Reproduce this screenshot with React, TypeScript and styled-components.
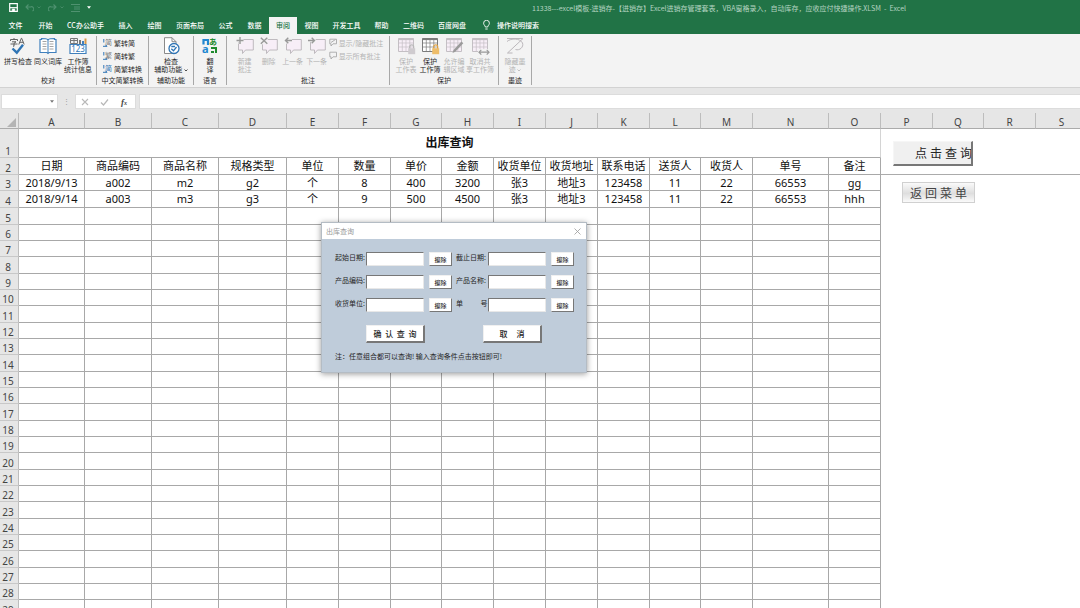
import React from "react";
import styled, { createGlobalStyle, css } from "styled-components";

const sans = `"Noto Sans", "Noto Sans CJK SC", sans-serif`;
const cjk = `"Noto Sans CJK SC", "Noto Sans", sans-serif`;

const Global = createGlobalStyle`
  * { box-sizing: border-box; }
  body { margin: 0; background: #fff; font: 7px/8px ${cjk}; color: #262626; overflow: hidden; }
  button, input { font: inherit; color: inherit; margin: 0; padding: 0; border: 0; border-radius: 0; background: none; }
`;

const Window = styled.div`
  display: flex;
  flex-direction: column;
  height: 100vh;
  overflow: hidden;
`;

/* ---------- title bar and tabs ---------- */

const TitleBar = styled.header`
  display: flex;
  align-items: center;
  flex: none;
  height: 17px;
  padding: 0 0 2px 9px;
  background: #217346;
  color: #b5d3c1;
`;

const QuickTools = styled.div`
  display: flex;
  align-items: center;
  gap: 7px;
  width: 523px;
`;

const QuickButton = styled.button<{ $dim?: boolean }>`
  display: flex;
  align-items: center;
  gap: 3px;
  color: ${(p) => (p.$dim ? "#4f9270" : "#fff")};
`;

const TitleText = styled.h1`
  margin: 0;
  font: 400 7px/10px ${cjk};
  white-space: nowrap;
`;

const TabBar = styled.nav`
  display: flex;
  flex: none;
  height: 17px;
  background: #217346;
`;

const Tab = styled.button<{ $w: number; $active?: boolean }>`
  width: ${(p) => p.$w}px;
  && { padding-bottom: 2px; }
  color: ${(p) => (p.$active ? "#217346" : "#fff")};
  background: ${(p) => (p.$active ? "#f3f3f3" : "transparent")};
  font-weight: 500;
  white-space: nowrap;
`;

const Tell = styled.button`
  display: flex;
  align-items: center;
  gap: 7px;
  && { padding-bottom: 2px; margin-left: 10px; }
  color: #fff;
  font-weight: 500;
`;

/* ---------- ribbon ---------- */

const Ribbon = styled.div`
  display: flex;
  flex: none;
  height: 54px;
  padding: 2px 0;
  background: #f3f3f3;
  border-bottom: 1px solid #d2d2d2;
`;

const Group = styled.section<{ $w: number }>`
  display: flex;
  flex-direction: column;
  width: ${(p) => p.$w}px;
  border-right: 1px solid #a8a8a8;
`;

const GroupBody = styled.div`
  display: flex;
  justify-content: center;
  flex: 1;
`;

const GroupName = styled.div`
  height: 9px;
  text-align: center;
  white-space: nowrap;
`;

const Big = styled.button<{ $w: number; $off?: boolean }>`
  display: flex;
  flex-direction: column;
  align-items: center;
  width: ${(p) => p.$w}px;
  padding-top: 1px;
  white-space: nowrap;
  color: ${(p) => (p.$off ? "#b4b4b4" : "#262626")};
  svg { flex: none; margin-bottom: 2px; }
  span svg { margin-bottom: 0; }
`;

const SmallList = styled.div`
  display: flex;
  flex-direction: column;
`;

const Small = styled.button<{ $off?: boolean }>`
  display: flex;
  align-items: center;
  gap: 2px;
  height: 13px;
  white-space: nowrap;
  color: ${(p) => (p.$off ? "#b4b4b4" : "#262626")};
`;

/* ---------- formula bar ---------- */

const FormulaBar = styled.div`
  display: flex;
  flex: none;
  height: 25px;
  padding: 6px 0 4px 1px;
  background: #e6e6e6;
`;

const NameBox = styled.div`
  display: flex;
  align-items: center;
  width: 57px;
  padding-right: 3px;
  background: #fff;
  border: 1px solid #dcdcdc;
  input { flex: 1; min-width: 0; outline: 0; }
`;

const Grip = styled.span`
  width: 17px;
  line-height: 15px;
  text-align: center;
  color: #999;
`;

const FormulaTools = styled.div`
  display: flex;
  align-items: center;
  justify-content: space-around;
  width: 61px;
  margin-right: 3px;
  background: #fff;
  border: 1px solid #dcdcdc;
`;

const FormulaInput = styled.input`
  flex: 1;
  min-width: 0;
  && { background: #fff; border: 1px solid #dcdcdc; border-right: 0; }
`;

/* ---------- sheet ---------- */

const Sheet = styled.main`
  position: relative;
  flex: 1;
  min-height: 0;
  overflow: hidden;
`;

const Grid = styled.table`
  table-layout: fixed;
  width: 1088px;
  border-collapse: separate;
  border-spacing: 0;
  font: 11px/14px ${sans};
  color: #111;
`;

const headCell = css`
  padding: 0;
  background: #e6e6e6;
  font: 400 10px/12px ${sans};
  color: #444;
`;

const ColHead = styled.th`
  ${headCell}
  height: 15px;
  padding-top: 3px;
  border-right: 1px solid #bdbdbd;
  border-bottom: 1px solid #ababab;
`;

const Corner = styled(ColHead)`
  padding: 0 2px 1px 0;
  text-align: right;
  vertical-align: bottom;
  svg { display: block; margin-left: auto; }
`;

const Row = styled.tr<{ $h: number }>`
  height: ${(p) => p.$h}px;
`;

const RowHead = styled.th`
  ${headCell}
  padding-right: 2px;
  vertical-align: bottom;
  border-right: 1px solid #bdbdbd;
  border-bottom: 1px solid #c8c8c8;
`;

const Cell = styled.td`
  padding: 0;
  text-align: center;
  white-space: nowrap;
  border-right: 1px solid #a8a8a8;
  border-bottom: 1px solid #a8a8a8;
`;

const TitleCell = styled(Cell)`
  padding-bottom: 2px;
  font: 700 12px/16px ${cjk};
  border-right-color: #d4d4d4;
`;

const Blank = styled.td<{ $line?: boolean }>`
  padding: 0;
  border-bottom: ${(p) => (p.$line ? "1px solid #ababab" : "0")};
`;

const QueryButton = styled.button`
  position: absolute;
  left: 893px;
  top: 28px;
  width: 80px;
  height: 25px;
  overflow: hidden;
  && {
    padding-left: 21px;
    background: #f0f0f0;
    border: 1px solid #f6f6f6;
    border-right: 2px solid #777;
    border-bottom: 2px solid #777;
    font: 12px/16px ${cjk};
    letter-spacing: 3px;
    text-align: left;
    white-space: nowrap;
  }
`;

const BackButton = styled.button`
  position: absolute;
  left: 902px;
  top: 69px;
  width: 73px;
  height: 21px;
  && {
    padding-left: 3px;
    background: linear-gradient(#fafafa, #dedede 55%, #fafafa);
    border: 1px solid #d0d0d0;
    color: #444;
    font: 12px/16px ${cjk};
    letter-spacing: 3px;
    white-space: nowrap;
  }
`;

/* ---------- query dialog ---------- */

const Dialog = styled.section`
  position: absolute;
  left: 321px;
  top: 109px;
  width: 266px;
  background: #bfccda;
  border: 1px solid #b4bcc4;
  box-shadow: 0 1px 6px rgba(0, 0, 0, 0.4);
`;

const DialogTitle = styled.header`
  display: flex;
  align-items: center;
  justify-content: space-between;
  height: 16px;
  padding: 0 5px 0 4px;
  background: #fff;
  color: #999;
  button { display: flex; }
`;

const Form = styled.form`
  padding: 13px 8px 11px 13px;
`;

const Fields = styled.div`
  display: grid;
  grid-template-columns: 31px 58px 32px 32px 58px 32px;
  row-gap: 9px;
`;

const Label = styled.label`
  height: 14px;
  line-height: 10px;
  white-space: pre;
`;

const Field = styled.input`
  height: 14px;
  min-width: 0;
  && {
    background: #fff;
    border: 1px solid #e8e8e8;
    border-top-color: #777;
    border-left-color: #777;
  }
`;

const raised = css`
  background: #fff;
  border: 1px solid #f0f0f0;
  border-right-color: #777;
  border-bottom-color: #777;
`;

const Clear = styled.button`
  height: 14px;
  && {
    ${raised}
    margin: 0 4px 0 5px;
    padding-top: 2px;
    font: 500 6px/8px ${cjk};
  }
`;

const Actions = styled.div`
  display: flex;
  gap: 58px;
  margin: 13px 0 8px 31px;
`;

const Action = styled.button`
  width: 59px;
  height: 18px;
  && {
    ${raised}
    border-width: 1px 2px 2px 1px;
    font: 500 8px/10px ${cjk};
    white-space: pre;
  }
`;

const Note = styled.p`
  margin: 0;
  line-height: 10px;
`;

/* ---------- icons ---------- */

const Caret = ({ c = "currentColor" }: { c?: string }) => (
  <svg width="4" height="3" viewBox="0 0 5 3"><path d="M0 0h5L2.500 3z" fill={c} /></svg>
);

const Chevron = () => (
  <svg width="4" height="3" viewBox="0 0 4 3"><path d="M.5.5 2 2 3.500.5" fill="none" stroke="currentColor" strokeWidth=".8" /></svg>
);

const SaveIcon = () => (
  <svg width="9" height="9" viewBox="0 0 9 9" fill="none" stroke="#fff">
    <path d="M.7.7h7.600v7.600H.7z" strokeWidth="1.200" />
    <path d="M1 4.700h7" strokeWidth="1.200" /><path d="M3.200 6v2.500h2.600V6z" fill="#fff" strokeWidth=".6" />
  </svg>
);

const UndoIcon = ({ flip }: { flip?: boolean }) => (
  <svg width="9" height="8" viewBox="0 0 9 8" fill="none" stroke="currentColor" strokeWidth="1.100">
    <path d={flip ? "M5.500.5 8 3 5.500 5.500M8 3H3.500a2 2 0 0 0-2 4" : "M3.500.5 1 3l2.500 2.500M1 3h4.500a2 2 0 0 1 2 4"} />
  </svg>
);

const ListIcon = () => (
  <svg width="9" height="8" viewBox="0 0 9 8" fill="none" stroke="currentColor"><path d="M0 .5h9M3 3h6M3 5h6M0 7.500h9" /></svg>
);

const BulbIcon = () => (
  <svg width="7" height="10" viewBox="0 0 7 10" fill="none" stroke="#fff" strokeWidth=".9">
    <path d="M2.300 7C2.300 5.500.6 5 .6 3.200a2.900 2.900 0 0 1 5.800 0C6.400 5 4.700 5.500 4.700 7zM2.300 9h2.400" />
  </svg>
);

const SpellIcon = () => (
  <svg width="18" height="18" viewBox="0 0 18 18" fill="none">
    <path d="M5 1v1.300M1.500 4V2.500h7V4M3 4.800h4L5 6.300v3L4 9M1.500 7h7" stroke="#555" strokeWidth=".9" />
    <path d="m9.800 7.500 2.500-6.200h.4l2.500 6.200M10.700 5.300h3.600" stroke="#555" strokeWidth=".9" />
    <path d="m3.500 11.500 4.300 4.200 6.200-8" stroke="#2f75b5" strokeWidth="2.400" />
  </svg>
);

const BookIcon = () => (
  <svg width="18" height="18" viewBox="0 0 18 18" fill="none">
    <path d="M1 2.500h1.500V1.500c2.500 0 5 0 6.500 1.200C10.500 1.500 13 1.500 15.500 1.500v1H17v13h-7l-1 1-1-1H1z" fill="#fff" stroke="#4080bd" strokeWidth="1.200" />
    <path d="M9 3v13" stroke="#4080bd" />
    <path d="M3.500 4.500h4M3.500 7h4M3.500 9.500h4M3.500 12h4M10.500 4.500h4M10.500 7h4M10.500 9.500h4M10.500 12h4" stroke="#8d8d8d" strokeWidth=".8" />
  </svg>
);

const StatsIcon = () => (
  <svg width="18" height="18" viewBox="0 0 18 18" fill="none">
    <path d="M1.500 1.500h7v5h-7zM1.500 3.500h7M5 1.500v5" stroke="#777" />
    <path d="M11 7V3" stroke="#777" strokeWidth="2" /><path d="M14 7V4" stroke="#4080bd" strokeWidth="2" /><path d="M16.500 7V1.500" stroke="#d89a4a" strokeWidth="2" />
    <path d="M1 7.500h16v9H1z" fill="#fff" stroke="#4080bd" strokeWidth="1.200" />
    <text x="9" y="15" textAnchor="middle" fontSize="8" fontFamily="Noto Sans" fill="#2f75b5">123</text>
  </svg>
);

const ConvertIcon = ({ glyph, both }: { glyph: string; both?: boolean }) => (
  <svg width="9" height="9" viewBox="0 0 9 9">
    <text x="2" y="7" fontSize="7" fontFamily="Noto Sans CJK SC" fill={both ? "#2f75b5" : "#777"}>{glyph}</text>
    <path d="M.8 1v3.500M0 8.300h4M2.500 6.800 4 8.300" stroke="#2f75b5" fill="none" />
  </svg>
);

const CheckAccessIcon = () => (
  <svg width="18" height="18" viewBox="0 0 18 18" fill="none">
    <path d="M2.500.7h7.500l4 4v11.800H2.500z" fill="#fff" stroke="#8a8a8a" /><path d="M10 .7v4h4" stroke="#8a8a8a" />
    <circle cx="12" cy="11.500" r="5" fill="#fff" stroke="#2f75b5" strokeWidth="1.300" />
    <path d="M9.300 11.800 11.500 13.800l3-3.800M9.300 9.500H13" stroke="#2f75b5" strokeWidth="1.300" />
  </svg>
);

const TranslateIcon = () => (
  <svg width="18" height="18" viewBox="0 0 18 18" fill="none">
    <path d="M2.500 2v5.500M2.500 3H7v5" stroke="#2186d0" strokeWidth="2.200" />
    <text x="8" y="8" fontSize="8" fontWeight="700" fontFamily="Noto Sans CJK JP" fill="#1e8a2e">あ</text>
    <text x="1" y="16" fontSize="11" fontWeight="700" fontFamily="Noto Sans" fill="#2186d0">a</text>
    <path d="M10 11h5v5M10 15h3" stroke="#1e8a2e" strokeWidth="2" />
  </svg>
);

const marks = {
  add: "M4 0v7M.5 3.500h7",
  del: "M.8.8l6.500 6M7.300.8.8 6.800",
  prev: "M8 3.500H1.500M4.300.8 1.500 3.500l2.800 2.700",
  next: "M0 3.500h6.500M3.700.8 6.500 3.500 3.700 6.200",
};

const CommentIcon = ({ mark }: { mark: keyof typeof marks }) => (
  <svg width="18" height="18" viewBox="0 0 18 18" fill="none">
    <path d="M2.500 2.500h14.800v10.500H9.500l-3 3.500V13h-4z" fill="#f7eef7" stroke="#b9b4b9" strokeWidth=".9" />
    <path d={marks[mark]} stroke="#f3f3f3" strokeWidth="3" />
    <path d={marks[mark]} stroke="#999" strokeWidth="1.400" />
  </svg>
);

const NoteIcon = ({ slash }: { slash?: boolean }) => (
  <svg width="8" height="9" viewBox="0 0 8 9" fill="none" stroke="#a8a8a8" strokeWidth=".9">
    <path d="M.8 1.200h6.700v4.600H4L2 8V5.800H.8z" />{slash && <path d="m2 4.500 4.500-3" />}
  </svg>
);

const SheetIcon = ({ kind }: { kind: "sheet" | "book" | "edit" | "share" }) => {
  const on = kind === "book";
  const ink = on ? "#7b7b7b" : "#c4bfc4";
  return (
    <svg width="19" height="18" viewBox="0 0 19 18" fill="none">
      <path d="M1.500 1.500h15v13h-15z" fill={on ? "#fff" : "#f7eef7"} stroke={ink} />
      <path d="M1.500 2.300h15" stroke={ink} strokeWidth="1.600" />
      <path d="M1.500 6h15M1.500 10h15M5.300 2v12.500M9 2v12.500M12.800 2v12.500" stroke={ink} strokeWidth=".7" />
      {(kind === "sheet" || on) && (
        <>
          <path d="M12.700 11.500V9.800a2 2 0 0 1 4 0v1.700" stroke={on ? "#dfa243" : "#b8b8b8"} strokeWidth="1.200" />
          <path d="M11.200 11.200h7v6h-7z" fill={on ? "#eebd6a" : "#cfcbcf"} />
        </>
      )}
      {kind === "edit" && <path d="m7.500 16 1-3 8-8.500 1.800 1.800-8 8.500z" fill="#9a9a9a" />}
      {kind === "share" && (
        <>
          <path d="M7 12h12v6H7z" fill="#f3f3f3" />
          <path d="M8 15.200h10M10.300 12.800 8 15.200l2.300 2.400M15.700 12.800l2.300 2.400-2.300 2.400" stroke="#999" strokeWidth="1.200" />
        </>
      )}
    </svg>
  );
};

const InkIcon = () => (
  <svg width="19" height="18" viewBox="0 0 19 18" fill="none" stroke="#b4b0b4" strokeWidth=".9">
    <path d="M1 1.500h15.500M1 4.500C5 1 14 1 16.500 6c1.500 4-3 8-7 6.500M1.500 16 17 1.500M1.500 16h5" />
  </svg>
);

/* ---------- data ---------- */

const tabs: [string, number][] = [
  ["开始", 29], ["CC办公助手", 51], ["插入", 29], ["绘图", 29], ["页面布局", 42], ["公式", 29], ["数据", 29],
  ["审阅", 28], ["视图", 29], ["开发工具", 41], ["帮助", 29], ["二维码", 35], ["百度网盘", 42],
];

const columns: [string, number][] = [
  ["A", 66], ["B", 67], ["C", 67], ["D", 68], ["E", 52], ["F", 52], ["G", 51], ["H", 52], ["I", 52], ["J", 52],
  ["K", 52], ["L", 51], ["M", 52], ["N", 76], ["O", 52], ["P", 52], ["Q", 51], ["R", 52], ["S", 52],
];

const records: string[][] = [
  ["日期", "商品编码", "商品名称", "规格类型", "单位", "数量", "单价", "金额", "收货单位", "收货地址", "联系电话", "送货人", "收货人", "单号", "备注"],
  ["2018/9/13", "a002", "m2", "g2", "个", "8", "400", "3200", "张3", "地址3", "123458", "11", "22", "66553", "gg"],
  ["2018/9/14", "a003", "m3", "g3", "个", "9", "500", "4500", "张3", "地址3", "123458", "11", "22", "66553", "hhh"],
];

const rowNumbers = Array.from({ length: 28 }, (_, i) => i + 2);
const rowHeight = (n: number) => (n === 4 || n % 3 === 2 ? 17 : 16);

const fields: [string, string][] = [
  ["start", "起始日期:"], ["end", "截止日期:"], ["code", "产品编码:"],
  ["name", "产品名称:"], ["unit", "收货单位:"], ["order", "单\u3000\u3000\u2002号"],
];

export default function App() {
  return (
    <Window>
      <Global />
      <TitleBar>
        <QuickTools>
          <QuickButton aria-label="保存"><SaveIcon /></QuickButton>
          <QuickButton $dim aria-label="撤消"><UndoIcon /><Chevron /></QuickButton>
          <QuickButton $dim aria-label="恢复"><UndoIcon flip /><Chevron /></QuickButton>
          <QuickButton $dim aria-label="列表"><ListIcon /></QuickButton>
          <QuickButton aria-label="自定义"><Caret /></QuickButton>
        </QuickTools>
        <TitleText>11338---excel模板-进销存-【进销存】Excel进销存管理套表，VBA窗格录入，自动库存，应收应付快捷操作.XLSM&nbsp; -&nbsp; Excel</TitleText>
      </TitleBar>
      <TabBar>
        <Tab $w={31}>文件</Tab>
        {tabs.map(([name, w]) => <Tab key={name} $w={w} $active={name === "审阅"}>{name}</Tab>)}
        <Tell><BulbIcon />操作说明搜索</Tell>
      </TabBar>

      <Ribbon>
        <Group $w={97}>
          <GroupBody>
            <Big $w={30}><SpellIcon />拼写检查</Big>
            <Big $w={30}><BookIcon />同义词库</Big>
            <Big $w={30}><StatsIcon />工作簿<br />统计信息</Big>
          </GroupBody>
          <GroupName>校对</GroupName>
        </Group>
        <Group $w={52}>
          <GroupBody>
            <SmallList>
              <Small><ConvertIcon glyph="简" />繁转简</Small>
              <Small><ConvertIcon glyph="繁" />简转繁</Small>
              <Small><ConvertIcon glyph="简" both />简繁转换</Small>
            </SmallList>
          </GroupBody>
          <GroupName>中文简繁转换</GroupName>
        </Group>
        <Group $w={45}>
          <GroupBody><Big $w={40}><CheckAccessIcon />检查<span>辅助功能 <Chevron /></span></Big></GroupBody>
          <GroupName>辅助功能</GroupName>
        </Group>
        <Group $w={33}>
          <GroupBody><Big $w={20}><TranslateIcon />翻<br />译</Big></GroupBody>
          <GroupName>语言</GroupName>
        </Group>
        <Group $w={163}>
          <GroupBody>
            <Big $off $w={24}><CommentIcon mark="add" />新建<br />批注</Big>
            <Big $off $w={24}><CommentIcon mark="del" />删除</Big>
            <Big $off $w={24}><CommentIcon mark="prev" />上一条</Big>
            <Big $off $w={24}><CommentIcon mark="next" />下一条</Big>
            <SmallList>
              <Small $off><NoteIcon slash />显示/隐藏批注</Small>
              <Small $off><NoteIcon />显示所有批注</Small>
            </SmallList>
          </GroupBody>
          <GroupName>批注</GroupName>
        </Group>
        <Group $w={109}>
          <GroupBody>
            <Big $off $w={24}><SheetIcon kind="sheet" />保护<br />工作表</Big>
            <Big $w={24}><SheetIcon kind="book" />保护<br />工作簿</Big>
            <Big $off $w={24}><SheetIcon kind="edit" />允许编<br />辑区域</Big>
            <Big $off $w={28}><SheetIcon kind="share" />取消共<br />享工作簿</Big>
          </GroupBody>
          <GroupName>保护</GroupName>
        </Group>
        <Group $w={33}>
          <GroupBody><Big $off $w={28}><InkIcon />隐藏墨<span>迹 <Chevron /></span></Big></GroupBody>
          <GroupName>墨迹</GroupName>
        </Group>
      </Ribbon>

      <FormulaBar>
        <NameBox><input aria-label="名称框" /><Caret c="#777" /></NameBox>
        <Grip>⋮</Grip>
        <FormulaTools>
          <svg width="8" height="8" viewBox="0 0 8 8" stroke="#b8b8b8" strokeWidth="1.100"><path d="m1 1 6 6M7 1 1 7" /></svg>
          <svg width="9" height="8" viewBox="0 0 9 8" fill="none" stroke="#b8b8b8" strokeWidth="1.200"><path d="m1 4.500 2.500 2.500L8 1.500" /></svg>
          <svg width="10" height="10" viewBox="0 0 10 10" fill="#444" fontFamily="Liberation Serif" fontStyle="italic" fontWeight="700">
            <text x="1" y="8" fontSize="9">f</text><text x="4" y="8" fontSize="6">x</text>
          </svg>
        </FormulaTools>
        <FormulaInput aria-label="编辑栏" />
      </FormulaBar>

      <Sheet>
        <Grid>
          <colgroup>
            <col style={{ width: 19 }} />
            {columns.map(([c, w]) => <col key={c} style={{ width: w }} />)}
          </colgroup>
          <thead>
            <tr>
              <Corner><svg width="9" height="9" viewBox="0 0 9 9"><path d="M9 0v9H0z" fill="#b4b4b4" /></svg></Corner>
              {columns.map(([c]) => <ColHead key={c}>{c}</ColHead>)}
            </tr>
          </thead>
          <tbody>
            <Row $h={29}>
              <RowHead>1</RowHead>
              <TitleCell colSpan={15}>出库查询</TitleCell>
              <Blank colSpan={4} />
            </Row>
            {rowNumbers.map((n) => (
              <Row key={n} $h={rowHeight(n)}>
                <RowHead>{n}</RowHead>
                {columns.slice(0, 15).map(([c], i) => <Cell key={c}>{records[n - 2]?.[i]}</Cell>)}
                <Blank colSpan={4} $line={n === 2} />
              </Row>
            ))}
          </tbody>
        </Grid>

        <QueryButton>点击查询</QueryButton>
        <BackButton>返回菜单</BackButton>

        <Dialog role="dialog" aria-label="出库查询">
          <DialogTitle>
            出库查询
            <button aria-label="关闭">
              <svg width="7" height="7" viewBox="0 0 7 7" stroke="#999" strokeWidth=".8"><path d="m.5.5 6 6M6.500.5l-6 6" /></svg>
            </button>
          </DialogTitle>
          <Form onSubmit={(e) => e.preventDefault()}>
            <Fields>
              {fields.map(([id, text]) => (
                <React.Fragment key={id}>
                  <Label htmlFor={id}>{text}</Label>
                  <Field id={id} />
                  <Clear type="button">擦除</Clear>
                </React.Fragment>
              ))}
            </Fields>
            <Actions>
              <Action type="submit">{"确  认  查  询"}</Action>
              <Action type="button">{"取     消"}</Action>
            </Actions>
            <Note>注：任意组合都可以查询! 输入查询条件点击按钮即可!</Note>
          </Form>
        </Dialog>
      </Sheet>
    </Window>
  );
}
